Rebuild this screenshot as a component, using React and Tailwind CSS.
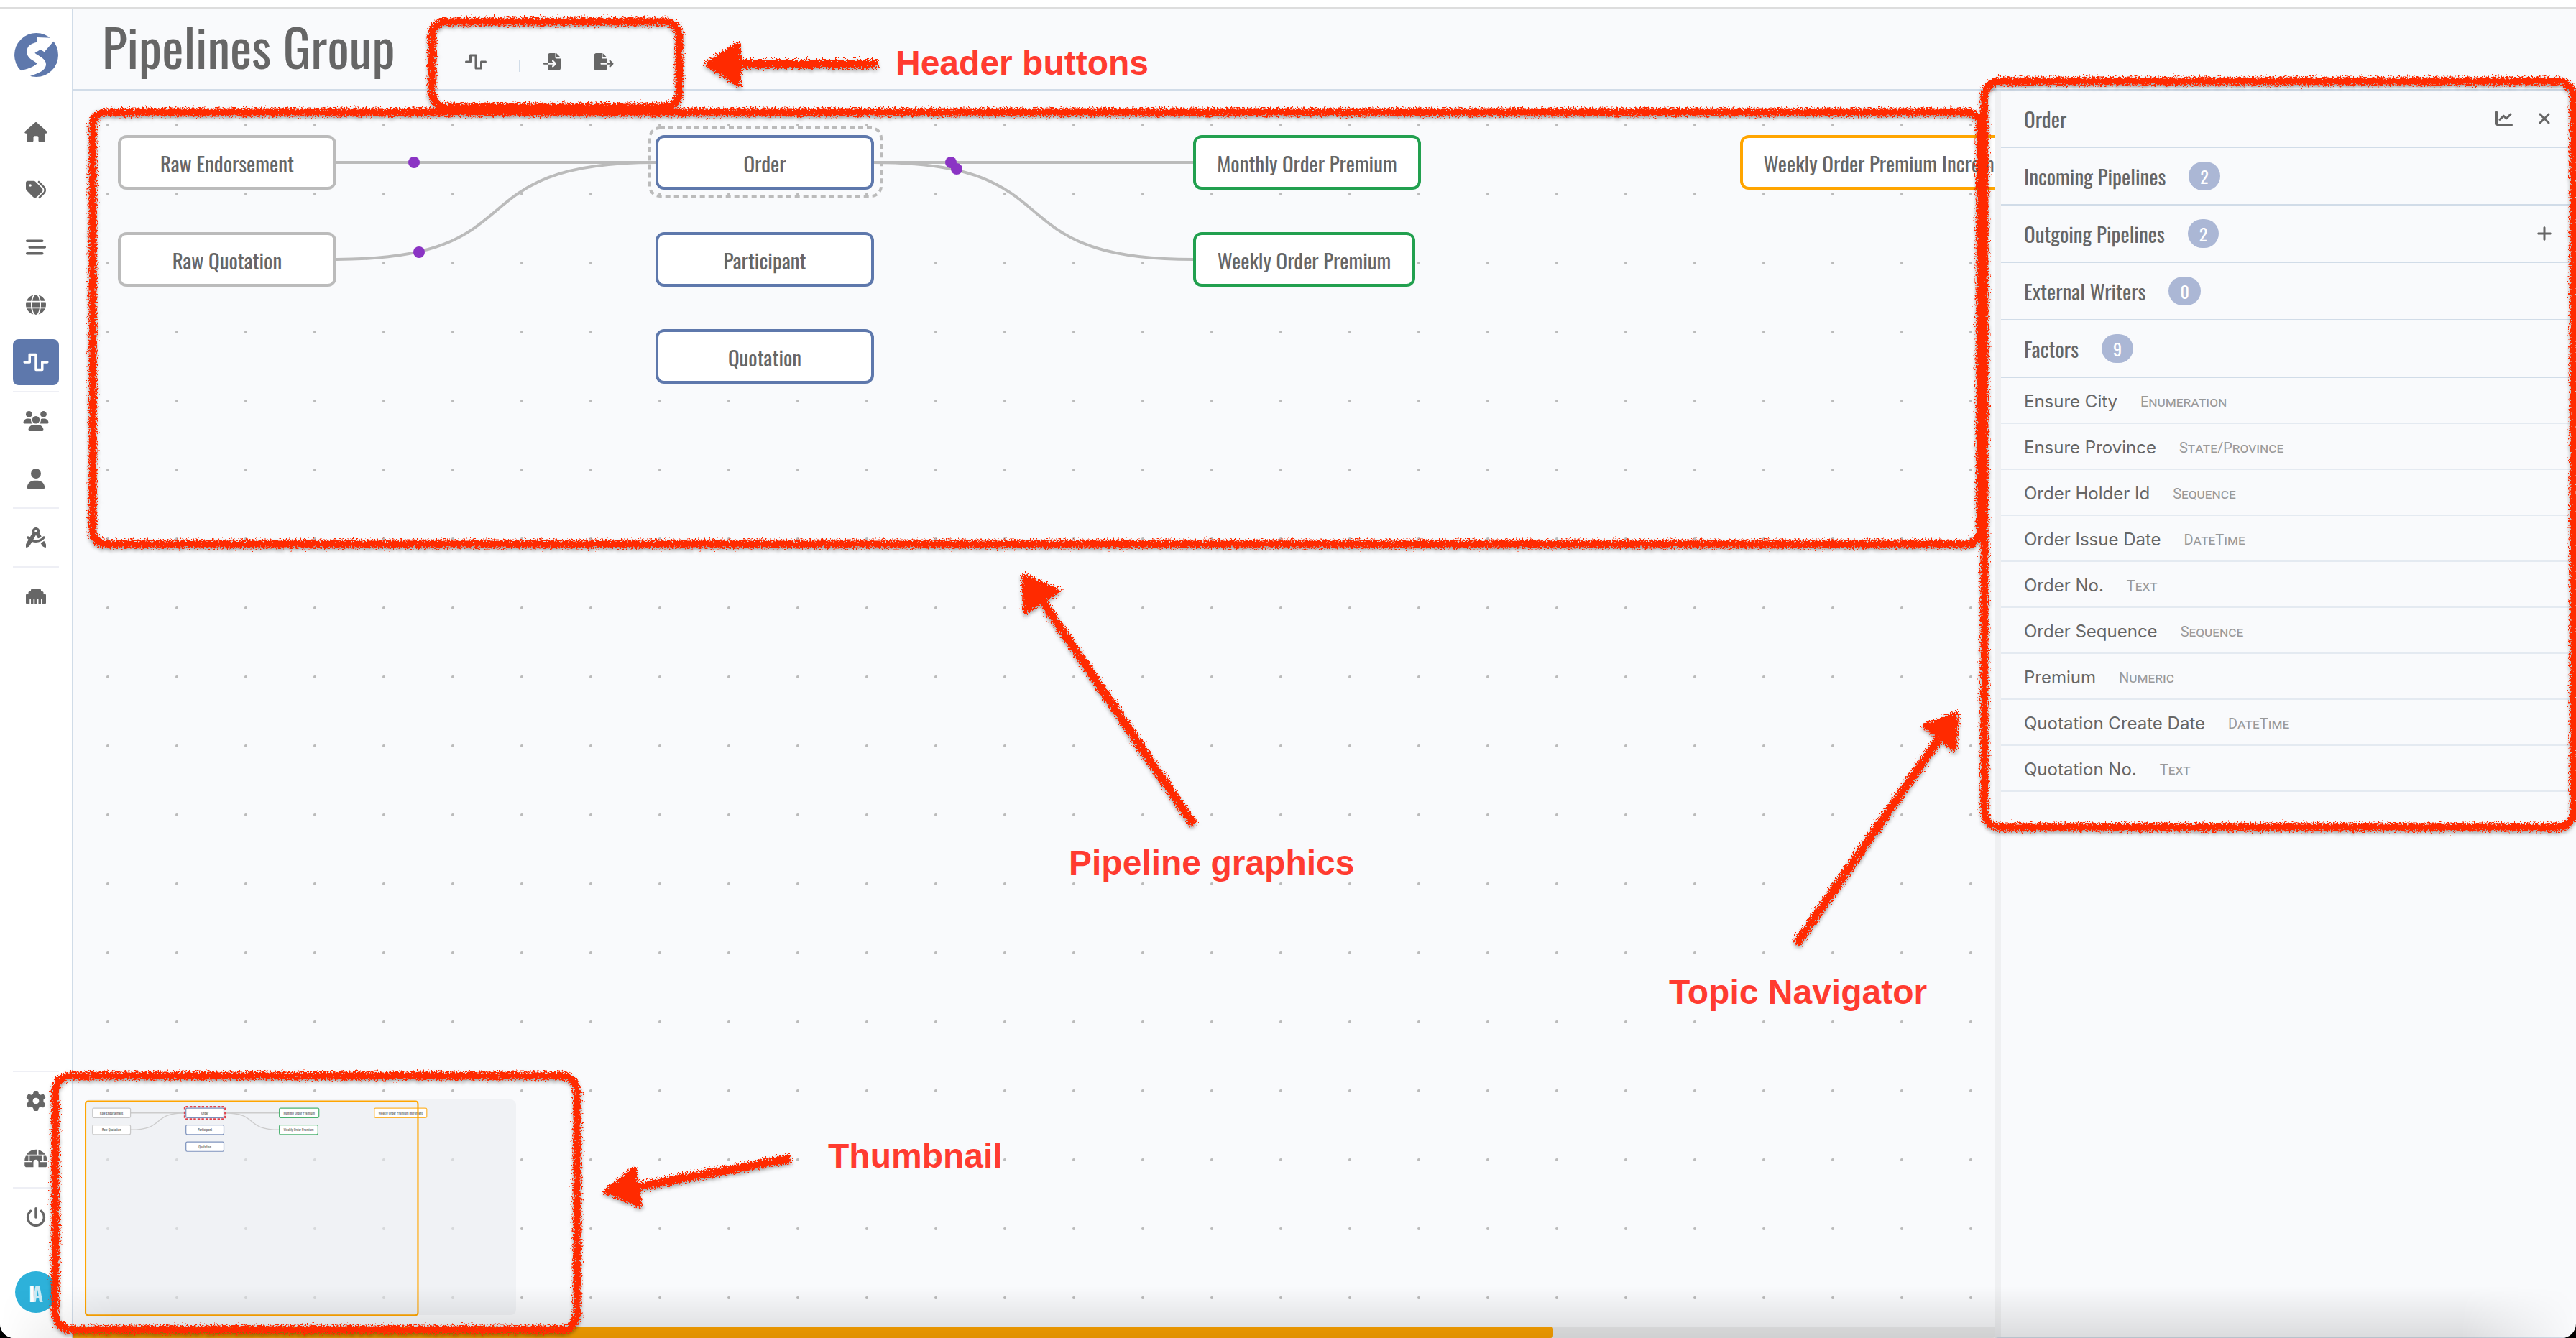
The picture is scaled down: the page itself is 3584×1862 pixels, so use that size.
import React from "react";
import {
  FaHouse, FaTags, FaBarsStaggered, FaGlobe, FaWaveSquare, FaUsers, FaUser,
  FaCompassDrafting, FaEthernet, FaGear, FaIgloo, FaPowerOff, FaFileImport,
  FaFileExport, FaChartLine, FaXmark, FaPlus,
} from "react-icons/fa6";

const COLORS = { raw: "#bbbbbb", topic: "#5e78ac", aggregate: "#22a04f", ratio: "#ffa500" };
const BORDERS = {
  raw: "border-[#bbbbbb]",
  topic: "border-[#5e78ac]",
  aggregate: "border-[#22a04f]",
  ratio: "border-[#ffa500]",
};

const NODES = [
  { label: "Raw Endorsement", kind: "raw", x: 62, y: 62, w: 304 },
  { label: "Raw Quotation", kind: "raw", x: 62, y: 197, w: 304 },
  { label: "Order", kind: "topic", x: 810, y: 62, w: 304 },
  { label: "Participant", kind: "topic", x: 810, y: 197, w: 304 },
  { label: "Quotation", kind: "topic", x: 810, y: 332, w: 304 },
  { label: "Monthly Order Premium", kind: "aggregate", x: 1558, y: 62, w: 317 },
  { label: "Weekly Order Premium", kind: "aggregate", x: 1558, y: 197, w: 309 },
  { label: "Weekly Order Premium Increment", kind: "ratio", x: 2319, y: 62, w: 420 },
];

const LINKS = [
  "M366 100H810",
  "M366 235C650 235 526 100 810 100",
  "M1114 100H1558",
  "M1114 100C1398 100 1274 235 1558 235",
];

const FACTORS = [
  ["Ensure City", "Enumeration"],
  ["Ensure Province", "State/Province"],
  ["Order Holder Id", "Sequence"],
  ["Order Issue Date", "DateTime"],
  ["Order No.", "Text"],
  ["Order Sequence", "Sequence"],
  ["Premium", "Numeric"],
  ["Quotation Create Date", "DateTime"],
  ["Quotation No.", "Text"],
];

function Logo() {
  return (
    <svg viewBox="57 138 183 183" className="h-[61px] w-[61px]" aria-label="Logo">
      <circle cx="148.500" cy="229.500" r="91.500" fill="#5e78ac" />
      <path
        fill="#fff"
        d="M152 156L210 158L232 146L222 171L182 217L166 207L142 221C160 235 189 245 189 268C188 300 150 306 118 320L92 322L78 296C110 290 136 280 153 265C135 250 109 245 109 215C109 190 130 180 153 176Z"
      />
    </svg>
  );
}

function NavButton({ icon: Icon, label, active }) {
  return (
    <button
      type="button"
      aria-label={label}
      className={
        active
          ? "my-2 flex h-16 w-16 items-center justify-center rounded-lg bg-[#5e78ac] text-white"
          : "my-2 flex h-16 w-16 items-center justify-center rounded-lg text-[#666666]"
      }
    >
      <Icon className="h-7 w-9" />
    </button>
  );
}

const Divider = () => <div className="h-0.5 w-16 shrink-0 bg-[#eeeff5]" />;

function Sidebar() {
  return (
    <nav className="flex w-[102px] shrink-0 flex-col items-center border-r-2 border-[#d1dce8] bg-white">
      <a href="#home" className="mt-[34px] mb-[37px]"><Logo /></a>
      <NavButton icon={FaHouse} label="Home" />
      <NavButton icon={FaTags} label="Topics" />
      <NavButton icon={FaBarsStaggered} label="Enumerations" />
      <NavButton icon={FaGlobe} label="Spaces" />
      <NavButton icon={FaWaveSquare} label="Pipelines" active />
      <Divider />
      <NavButton icon={FaUsers} label="User groups" />
      <NavButton icon={FaUser} label="Users" />
      <Divider />
      <NavButton icon={FaCompassDrafting} label="Tools" />
      <Divider />
      <NavButton icon={FaEthernet} label="Connections" />
      <div className="grow" />
      <Divider />
      <NavButton icon={FaGear} label="Settings" />
      <NavButton icon={FaIgloo} label="Switch workbench" />
      <Divider />
      <NavButton icon={FaPowerOff} label="Sign out" />
      <button
        type="button"
        className="mt-[35px] mb-[35px] flex h-[58px] w-[58px] items-center justify-center rounded-full bg-[#2db1da] font-[Oswald,sans-serif] text-[29px] leading-none font-semibold text-white"
      >
        I<span className="-ml-1 opacity-75">A</span>
      </button>
    </nav>
  );
}

function HeaderButton({ icon: Icon, label }) {
  return (
    <button type="button" aria-label={label} className="flex h-16 w-16 items-center justify-center text-[#666666]">
      <Icon className="h-6 w-8" />
    </button>
  );
}

function Header() {
  return (
    <header className="flex h-[114px] shrink-0 items-start border-b-2 border-[#d1dce8] pl-10">
      <h1 className="font-[Oswald,sans-serif] text-[72px] leading-[103px] text-[#666666]">Pipelines Group</h1>
      <div className="mt-[42px] ml-20 flex items-center">
        <HeaderButton icon={FaWaveSquare} label="Add pipeline" />
        <div className="mt-3 mr-3 ml-7 h-4 w-0.5 bg-[#d1dce8]" />
        <HeaderButton icon={FaFileImport} label="Import" />
        <div className="w-2" />
        <HeaderButton icon={FaFileExport} label="Export" />
      </div>
    </header>
  );
}

function Thumbnail() {
  return (
    <div className="absolute bottom-4 left-4 h-[300px] w-[600px] rounded-lg bg-[#eaecf0]/60">
      <svg viewBox="0 0 3454 1727" className="h-full w-full overflow-visible">
        <g transform="translate(0 8)">
          <g fill="none" stroke="#cccccc" strokeWidth="8">
            {LINKS.map((d) => <path key={d} d={d} />)}
          </g>
          {NODES.map((n) => (
            <g key={n.label}>
              <rect x={n.x} y={n.y} width={n.w} height="76" rx="10" fill="#fff" stroke={COLORS[n.kind]} strokeWidth="7" strokeOpacity="0.8" />
              <text x={n.x + n.w / 2} y={n.y + 50} textAnchor="middle" fontFamily="Oswald, sans-serif" fontSize="29" fill="#666">{n.label}</text>
            </g>
          ))}
          <rect x="800" y="50" width="324" height="100" rx="8" fill="none" stroke="#e0424c" strokeWidth="13" strokeDasharray="20 12" />
          <rect x="6" y="6" width="2662" height="1715" rx="20" fill="none" stroke="#ffa500" strokeWidth="12" />
        </g>
      </svg>
    </div>
  );
}

function Canvas() {
  return (
    <div className="flex min-w-0 grow flex-col">
      <div className="relative grow overflow-hidden bg-[radial-gradient(circle_at_48px_48px,#bbbbbb_1.500px,transparent_2.500px)] bg-[size:96px_96px]">
        <svg className="absolute inset-0 h-full w-full">
          <g fill="none" stroke="#bbbbbb" strokeWidth="4">
            {LINKS.map((d) => <path key={d} d={d} />)}
            <rect x="802" y="52" width="322" height="95" rx="14" strokeDasharray="7 5" />
          </g>
          <g fill="#8b34c4">
            <circle cx="474" cy="100" r="8" />
            <circle cx="481" cy="225" r="8" />
            <circle cx="1221" cy="100" r="8" />
            <circle cx="1229" cy="109" r="8" />
          </g>
        </svg>
        {NODES.map((n) => (
          <button
            key={n.label}
            type="button"
            style={{ left: n.x, top: n.y, width: n.w }}
            className={`absolute h-[76px] rounded-xl border-4 bg-white font-[Oswald,sans-serif] text-[29px] leading-none whitespace-nowrap text-[#666666] ${BORDERS[n.kind]}`}
          >
            {n.label}
          </button>
        ))}
        <Thumbnail />
      </div>
      <div className="h-4 shrink-0 rounded-r bg-[#ecedee]">
        <div className="h-full w-[77%] rounded-r bg-[#ffa500]" />
      </div>
    </div>
  );
}

function IconButton({ icon: Icon, label }) {
  return (
    <button type="button" aria-label={label} className="flex h-14 w-14 items-center justify-center text-[#666666]">
      <Icon className="h-6 w-8" />
    </button>
  );
}

function Section({ title, count, children }) {
  return (
    <div className="flex h-20 items-center border-b-2 border-[#d1dce8] pr-4 pl-8 font-[Oswald,sans-serif] text-[29px]">
      <h2>{title}</h2>
      {count !== undefined && (
        <span className="ml-8 flex h-10 items-center rounded-full bg-[#abb7d5] px-4 text-2xl text-white">{count}</span>
      )}
      <div className="grow" />
      {children}
    </div>
  );
}

function Navigator() {
  return (
    <aside className="flex w-[808px] shrink-0 flex-col border-b-2 border-l-8 border-b-[#d1dce8] border-l-[#eff0f2] text-[#666666]">
      <Section title="Order">
        <IconButton icon={FaChartLine} label="Chart" />
        <IconButton icon={FaXmark} label="Close" />
      </Section>
      <Section title="Incoming Pipelines" count={2} />
      <Section title="Outgoing Pipelines" count={2}>
        <IconButton icon={FaPlus} label="Add outgoing pipeline" />
      </Section>
      <Section title="External Writers" count={0} />
      <Section title="Factors" count={9} />
      <ul>
        {FACTORS.map(([name, type]) => (
          <li key={name} className="flex h-16 items-center border-b-2 border-[#e4eaf1] pt-1 pl-8 font-[Inter,sans-serif] text-2xl">
            {name}
            <span className="ml-8 font-[Roboto,sans-serif] text-xl text-[#999999] [font-variant:small-caps]">{type}</span>
          </li>
        ))}
      </ul>
    </aside>
  );
}

function Note({ className, children }) {
  return (
    <span className={`absolute font-['Liberation_Sans',sans-serif] text-5xl leading-none font-bold whitespace-nowrap text-[#ff3b30] ${className}`}>
      {children}
    </span>
  );
}

function Annotations() {
  return (
    <div className="pointer-events-none absolute inset-0 overflow-hidden">
      <svg className="absolute inset-0 h-full w-full">
        <defs>
          <filter id="crayon" filterUnits="userSpaceOnUse" x="0" y="0" width="3584" height="1862">
            <feTurbulence type="fractalNoise" baseFrequency="0.45" numOctaves="3" seed="4" result="noise" />
            <feDisplacementMap in="SourceGraphic" in2="noise" scale="14" xChannelSelector="R" yChannelSelector="G" result="rough" />
            <feDropShadow in="rough" dx="0" dy="3" stdDeviation="2" floodColor="#000" floodOpacity="0.35" />
          </filter>
        </defs>
        <g filter="url(#crayon)" fill="none" stroke="#ff2a00" strokeWidth="11" strokeLinejoin="round">
          <rect x="601" y="30" width="344" height="119" rx="20" />
          <rect x="129" y="156" width="2626" height="601" rx="18" />
          <rect x="2761" y="113" width="820" height="1038" rx="22" />
          <rect x="77" y="1497" width="726" height="353" rx="22" />
          <g strokeWidth="12">
            <path d="M1025 89H1221" />
            <path d="M1450 836L1661 1148" />
            <path d="M2697 1029L2499 1314" />
            <path d="M885 1652L1100 1612" />
          </g>
          <g fill="#ff2a00" strokeWidth="6">
            <path d="M983 89L1028 61V118Z" />
            <path d="M1424 801L1473 822L1426 852Z" />
            <path d="M2722 993L2677 1010L2720 1043Z" />
            <path d="M842 1658L882 1627L891 1678Z" />
          </g>
        </g>
      </svg>
      <Note className="top-16 left-[1246px]">Header buttons</Note>
      <Note className="top-[1177px] left-[1487px]">Pipeline graphics</Note>
      <Note className="top-[1357px] left-[2322px]">Topic Navigator</Note>
      <Note className="top-[1585px] left-[1152px]">Thumbnail</Note>
    </div>
  );
}

export default function App() {
  return (
    <div className="h-screen bg-black">
      <div className="relative flex h-full flex-col overflow-hidden rounded-b-[20px] border-t-[10px] border-white bg-[#f9fafc]">
        <div className="h-0.5 shrink-0 bg-[#dddddd]" />
        <div className="flex min-h-0 grow">
          <Sidebar />
          <main className="flex min-w-0 grow flex-col">
            <Header />
            <div className="flex min-h-0 grow">
              <Canvas />
              <Navigator />
            </div>
          </main>
        </div>
        <div className="pointer-events-none absolute inset-x-0 bottom-0 h-[72px] bg-linear-to-b from-transparent to-black/12 [mask-image:linear-gradient(to_right,transparent,black_160px,black_calc(100%-160px),transparent)]" />
      </div>
      <Annotations />
    </div>
  );
}
